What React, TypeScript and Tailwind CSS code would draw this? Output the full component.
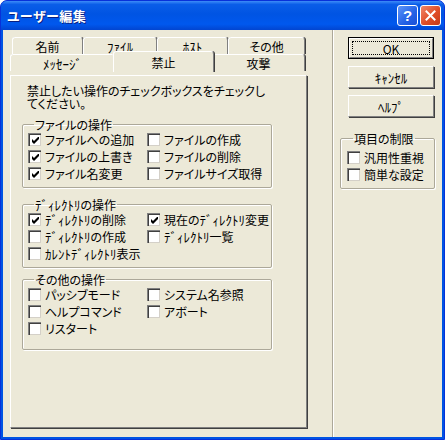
import React from 'react';

const FONT = "font-['Noto_Sans_CJK_JP','Noto_Sans_CJK_SC',sans-serif] [font-feature-settings:'palt']";

// half-width katakana looks small in Noto, so bump those runs a bit
const hw = (text: string) =>
  text.split(/([\uFF61-\uFF9F]+)/).map((part, i) =>
    /[\uFF61-\uFF9F]/.test(part) ? (
      <span key={i} className="text-[13px]">
        {part}
      </span>
    ) : (
      part
    )
  );

interface CheckProps {
  label: string;
  checked?: boolean;
}

const CheckBox: React.FC<CheckProps> = ({ label, checked }) => (
  <div className="flex items-center h-[17px] gap-[4px] whitespace-nowrap">
    <span className="w-[13px] h-[13px] shrink-0 flex items-center justify-center bg-white border-t border-l border-[#808080] border-r-white border-b-white shadow-[inset_1px_1px_0_#404040,inset_-1px_-1px_0_#d4d0c8]">
      {checked && (
        <svg width="7" height="7" viewBox="0 0 7 7" className="ml-[1px] mt-[1px]">
          <path d="M0 2 L2 4 L6 0 L7 0 L7 2 L2 7 L0 5 Z" fill="#000" />
        </svg>
      )}
    </span>
    <span className="text-[12px] leading-[13px] text-black">{hw(label)}</span>
  </div>
);

const Group: React.FC<{ title: string; className: string; children: React.ReactNode }> = ({ title, className, children }) => (
  <fieldset className={`border border-[#aca899] rounded-[2px] shadow-[inset_1px_1px_0_#fff,1px_1px_0_#fff] ${className}`}>
    <legend className="ml-[6px] px-[1px] text-[12px] leading-[13px] text-black">{hw(title)}</legend>
    {children}
  </fieldset>
);

const Tab: React.FC<{ label: string; className: string }> = ({ label, className }) => (
  <div
    className={`h-[17px] flex items-center justify-center text-[12px] leading-[13px] text-black bg-[#ece9d8] border-t border-l border-white border-r border-r-[#808080] shadow-[1px_0_0_#404040] rounded-t-[3px] ${className}`}
  >
    {hw(label)}
  </div>
);

const Button: React.FC<{ label: string; isDefault?: boolean }> = ({ label, isDefault }) =>
  isDefault ? (
    <button className="w-[86px] h-[22px] p-0 border border-black bg-[#ece9d8] flex">
      <span className="flex-1 flex p-[2px] border-t border-l border-white border-r border-b border-r-[#808080] border-b-[#808080]">
        <span className="flex-1 flex items-center justify-center border border-dotted border-black text-[12px] leading-[13px] text-black">
          {label}
        </span>
      </span>
    </button>
  ) : (
    <button className="w-[86px] h-[22px] p-0 bg-[#ece9d8] flex items-center justify-center border-t border-l border-white border-r border-b border-r-[#808080] border-b-[#808080] shadow-[1px_1px_0_#404040] text-[12px] leading-[13px] text-black">
      {hw(label)}
    </button>
  );

export default function App() {
  return (
    <div className={`w-[445px] h-[440px] flex flex-col bg-[#0054e3] rounded-t-[7px] overflow-hidden border border-[#0831d9] ${FONT}`}>
      {/* title bar */}
      <div className="h-[29px] shrink-0 flex items-center pl-[6px] pr-[3px] bg-[linear-gradient(to_bottom,#3d8cf8_0%,#0a5de8_12%,#0054e3_45%,#0058ee_80%,#0245d0_100%)]">
        <span className="text-[13px] font-bold text-white [text-shadow:1px_1px_0_#0a1f80] tracking-[0.5px]">ユーザー編集</span>
        <div className="ml-auto flex gap-[2px]">
          <div className="w-[21px] h-[21px] rounded-[3px] border border-white bg-[linear-gradient(135deg,#5e95f9,#2361e6_60%,#1a50d6)] flex items-center justify-center text-white text-[15px] font-bold leading-none font-['Liberation_Sans',sans-serif]">
            ?
          </div>
          <div className="w-[21px] h-[21px] rounded-[3px] border border-white bg-[linear-gradient(135deg,#f0876a,#e04d27_55%,#c83a17)] flex items-center justify-center">
            <svg width="11" height="11" viewBox="0 0 11 11">
              <path d="M1.5 1.5 L9.5 9.5 M9.5 1.5 L1.5 9.5" stroke="#fff" strokeWidth="2" strokeLinecap="square" />
            </svg>
          </div>
        </div>
      </div>

      {/* body */}
      <div className="flex-1 mx-[2px] mb-[2px] bg-[#ece9d8] flex">
        {/* tab control */}
        <div className="w-[329px] pl-[7px] pt-[7px]">
          <div className="flex ml-[2px]">
            <Tab label="名前" className="w-[71px]" />
            <Tab label="ﾌｧｲﾙ" className="w-[74px]" />
            <Tab label="ﾎｽﾄ" className="w-[71px]" />
            <Tab label="その他" className="w-[77px]" />
          </div>
          <div className="flex">
            <Tab label="ﾒｯｾｰｼﾞ" className="w-[105px]" />
            <div className="relative z-10 -top-[3px] h-[21px] -mx-[2px] w-[101px] flex justify-center pt-[4px] text-[12px] leading-[13px] text-black bg-[#ece9d8] border-t border-l border-white border-r border-r-[#808080] shadow-[1px_0_0_#404040] rounded-t-[3px]">
              禁止
            </div>
            <Tab label="攻撃" className="w-[93px]" />
          </div>
          <div className="w-[297px] h-[353px] pl-[11px] pt-[8px] border-t border-l border-white border-r border-b border-r-[#808080] border-b-[#808080] shadow-[1px_1px_0_#404040]">
            <p className="ml-[5px] text-[12px] leading-[13px] text-black">
              禁止したい操作のチェックボックスをチェックし
              <br />
              てください。
            </p>

            <Group title="ファイルの操作" className="w-[250px] mt-[8px] pl-[5px] pb-[5px]">
              <div className="grid grid-cols-[119px_1fr]">
                <CheckBox label="ファイルへの追加" checked />
                <CheckBox label="ファイルの作成" />
                <CheckBox label="ファイルの上書き" checked />
                <CheckBox label="ファイルの削除" />
                <CheckBox label="ファイル名変更" checked />
                <CheckBox label="ファイルサイズ取得" />
              </div>
            </Group>

            <Group title="ﾃﾞｨﾚｸﾄﾘの操作" className="w-[250px] mt-[10px] pl-[5px] pb-[5px]">
              <div className="grid grid-cols-[119px_1fr]">
                <CheckBox label="ﾃﾞｨﾚｸﾄﾘの削除" checked />
                <CheckBox label="現在のﾃﾞｨﾚｸﾄﾘ変更" checked />
                <CheckBox label="ﾃﾞｨﾚｸﾄﾘの作成" />
                <CheckBox label="ﾃﾞｨﾚｸﾄﾘ一覧" />
                <CheckBox label="ｶﾚﾝﾄﾃﾞｨﾚｸﾄﾘ表示" />
              </div>
            </Group>

            <Group title="その他の操作" className="w-[250px] mt-[5px] pl-[5px] pb-[12px]">
              <div className="grid grid-cols-[119px_1fr]">
                <CheckBox label="パッシブモード" />
                <CheckBox label="システム名参照" />
                <CheckBox label="ヘルプコマンド" />
                <CheckBox label="アボート" />
                <CheckBox label="リスタート" />
              </div>
            </Group>
          </div>
        </div>

        {/* separator */}
        <div className="w-[2px] border-l border-[#aca899] border-r border-r-white" />

        {/* right column */}
        <div className="flex-1 pt-[7px]">
          <div className="pl-[14px] flex flex-col gap-[7px]">
            <Button label="OK" isDefault />
            <Button label="ｷｬﾝｾﾙ" />
            <Button label="ﾍﾙﾌﾟ" />
          </div>
          <Group title="項目の制限" className="ml-[6px] w-[95px] mt-[15px] pl-[6px] pt-[4px] pb-[5px]">
            <CheckBox label="汎用性重視" />
            <CheckBox label="簡単な設定" />
          </Group>
        </div>
      </div>
    </div>
  );
}
